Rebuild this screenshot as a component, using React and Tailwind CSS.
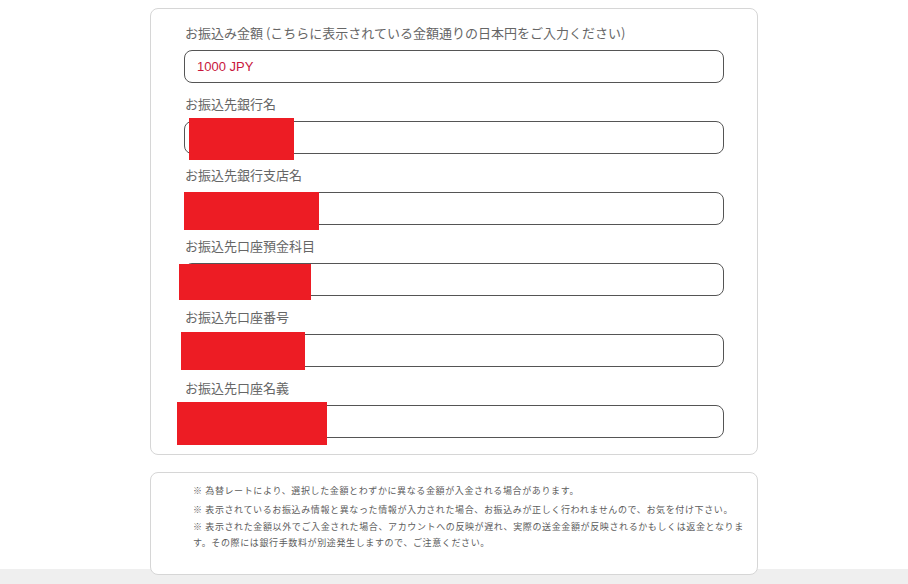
import React from 'react';

const jp = { fontFamily: '"Noto Sans CJK JP", "Noto Sans", sans-serif' };

const fields = [
  { label: 'お振込み金額 (こちらに表示されている金額通りの日本円をご入力ください)', value: '1000 JPY' },
  { label: 'お振込先銀行名', mask: 'left-[4px] -top-[4px] w-[105px] h-[42px]' },
  { label: 'お振込先銀行支店名', mask: '-left-[1px] -top-[1px] w-[135px] h-[38px]' },
  { label: 'お振込先口座預金科目', mask: '-left-[6px] top-0 w-[132px] h-[36px]' },
  { label: 'お振込先口座番号', mask: '-left-[4px] -top-[3px] w-[124px] h-[38px]' },
  { label: 'お振込先口座名義', mask: '-left-[8px] -top-[4px] w-[150px] h-[43px]' },
];

const notes = [
  ['※ 為替レートにより、選択した金額とわずかに異なる金額が入金される場合があります。'],
  ['※ 表示されているお振込み情報と異なった情報が入力された場合、お振込みが正しく行われませんので、お気を付け下さい。'],
  [
    '※ 表示された金額以外でご入金された場合、アカウントへの反映が遅れ、実際の送金金額が反映されるかもしくは返金となりま',
    'す。その際には銀行手数料が別途発生しますので、ご注意ください。',
  ],
];

const Field = ({ label, value, mask }) => (
  <div className="flex flex-col">
    <div className="h-[17px] leading-[16px] text-[13px] text-[#666] pl-px whitespace-nowrap" style={jp}>
      {label}
    </div>
    <div className="relative mt-2 h-[33px] rounded-[8px] border-[1.5px] border-[#555] bg-white flex items-center pl-[12px]">
      {value && (
        <span className="text-[13px] text-[#c8163c]" style={{ fontFamily: '"Liberation Sans", Arial, sans-serif' }}>
          {value}
        </span>
      )}
      {mask && <div className={`absolute bg-[#ed1c24] ${mask}`} />}
    </div>
  </div>
);

export default function App() {
  return (
    <div className="w-[908px] h-[584px] overflow-hidden bg-[linear-gradient(to_bottom,#ffffff_569px,#efefef_569px)] pt-2 pl-[150px]">
      {/* 振込情報 */}
      <div className="relative w-[608px] rounded-[8px] border border-[#d6d6d6] bg-white px-[33px] pt-4 pb-4 flex flex-col gap-[13px]">
        {fields.map((f, i) => (
          <Field key={i} {...f} />
        ))}
      </div>

      {/* 注意事項 */}
      <div className="relative mt-[17px] w-[608px] h-[103px] rounded-[8px] border border-[#d6d6d6] bg-white pl-[42px] pt-[10px]">
        {notes.map((lines, i) => (
          <p key={i} className={`text-[9px] leading-[16px] tracking-[0.62px] text-[#5c5c5c] whitespace-nowrap ${i === 0 ? 'mb-[3px]' : 'mb-px'}`} style={jp}>
            {lines.map((l, j) => (
              <React.Fragment key={j}>
                {j > 0 && <br />}
                {l}
              </React.Fragment>
            ))}
          </p>
        ))}
      </div>
    </div>
  );
}
